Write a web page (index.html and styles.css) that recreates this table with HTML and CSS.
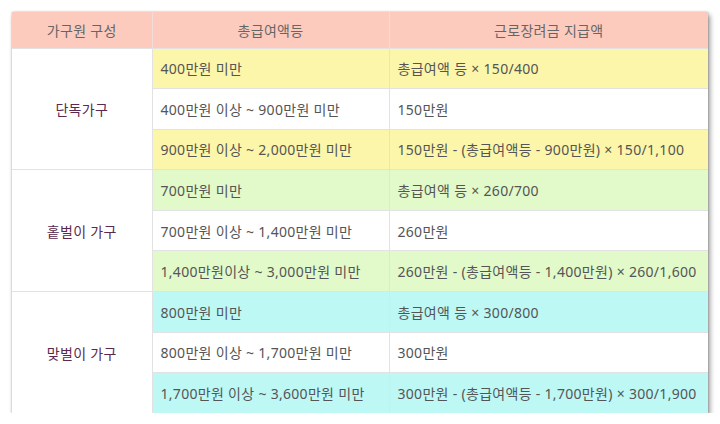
FILE: index.html
```html
<!DOCTYPE html>
<html lang="ko">
<head>
    <meta charset="UTF-8">
    <title>근로장려금 지급액</title>
    <link rel="stylesheet" href="styles.css">
</head>
<body>
    <div class="frame">
        <table class="pay-table">
            <colgroup>
                <col class="col-type">
                <col class="col-income">
                <col class="col-amount">
            </colgroup>
            <thead>
                <tr>
                    <th>가구원 구성</th>
                    <th>총급여액등</th>
                    <th>근로장려금 지급액</th>
                </tr>
            </thead>
            <tbody>
                <tr class="yellow">
                    <td class="group" rowspan="3">단독가구</td>
                    <td>400만원 미만</td>
                    <td>총급여액 등 × 150/400</td>
                </tr>
                <tr>
                    <td>400만원 이상 ~ 900만원 미만</td>
                    <td>150만원</td>
                </tr>
                <tr class="yellow">
                    <td>900만원 이상 ~ 2,000만원 미만</td>
                    <td>150만원 - (총급여액등 - 900만원) × 150/1,100</td>
                </tr>

                <tr class="green">
                    <td class="group" rowspan="3">홑벌이 가구</td>
                    <td>700만원 미만</td>
                    <td>총급여액 등 × 260/700</td>
                </tr>
                <tr>
                    <td>700만원 이상 ~ 1,400만원 미만</td>
                    <td>260만원</td>
                </tr>
                <tr class="green">
                    <td>1,400만원이상 ~ 3,000만원 미만</td>
                    <td>260만원 - (총급여액등 - 1,400만원) × 260/1,600</td>
                </tr>

                <tr class="cyan">
                    <td class="group" rowspan="3">맞벌이 가구</td>
                    <td>800만원 미만</td>
                    <td>총급여액 등 × 300/800</td>
                </tr>
                <tr>
                    <td>800만원 이상 ~ 1,700만원 미만</td>
                    <td>300만원</td>
                </tr>
                <tr class="cyan">
                    <td>1,700만원 이상 ~ 3,600만원 미만</td>
                    <td>300만원 - (총급여액등 - 1,700만원) × 300/1,900</td>
                </tr>
            </tbody>
        </table>
    </div>
</body>
</html>
```

FILE: styles.css
```css
* {
    margin: 0;
    padding: 0;
    box-sizing: border-box;
}

html, body {
    background-color: #fff;
    font-family: "Noto Sans", "Noto Sans CJK KR", sans-serif;
}

body {
    padding: 12px 0 0 12px;
}

.frame {
    width: 696px;
    background-color: #fff;
    box-shadow: 2px 3px 5px rgba(0, 0, 0, 0.4), 0 0 2px rgba(0, 0, 0, 0.25);
}

.pay-table {
    width: 100%;
    border-collapse: collapse;
    table-layout: fixed;
    font-size: 14px;
    letter-spacing: 0.3px;
    color: #555;
}

.col-type {
    width: 140px;
}

.col-income {
    width: 237px;
}

.pay-table th {
    height: 36px;
    background-color: #fdcbbd;
    color: #666;
    font-weight: normal;
    border-left: 1px solid #f2dcd5;
    text-align: center;
}

.pay-table th:first-child {
    border-left: none;
}

.pay-table td {
    height: 40.6px;
    padding: 0 8px;
    border-top: 1px solid #e2e2e2;
    border-left: 1px solid #e2e2e2;
    vertical-align: middle;
}

.pay-table td.group {
    border-left: none;
    text-align: center;
    color: #5a2a4e;
    background-color: #fff;
}

.yellow td {
    background-color: #fcf6aa;
}

.green td {
    background-color: #e2f9ca;
}

.cyan td {
    background-color: #bdf8f5;
}
```
